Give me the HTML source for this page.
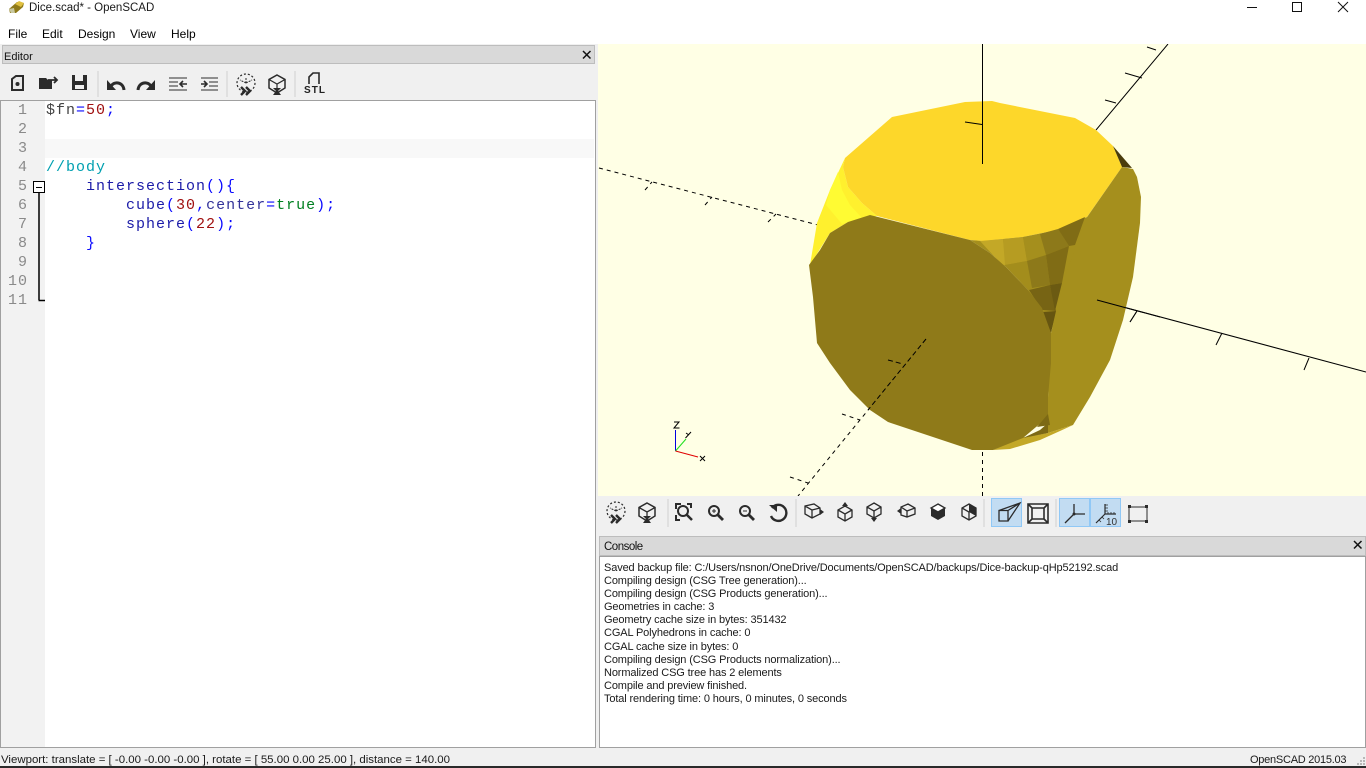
<!DOCTYPE html>
<html><head><meta charset="utf-8"><style>
*{box-sizing:border-box}
html,body{margin:0;padding:0;width:1366px;height:768px;overflow:hidden;background:#f0f0f0;font-family:"Liberation Sans",sans-serif;font-size:12px;color:#000}
#w{position:absolute;left:0;top:0;width:1366px;height:768px;overflow:hidden}
.a{position:absolute;white-space:nowrap}
.ln{position:absolute;left:0;width:28px;text-align:right;color:#8a8a8a;font-family:"Liberation Mono",monospace;font-size:15px;letter-spacing:1px;line-height:19px}
.cl{position:absolute;left:46px;white-space:pre;font-family:"Liberation Mono",monospace;font-size:15px;letter-spacing:1px;line-height:19px;color:#1c1ca8}
.r{color:#a01010}.b{color:#0a0aff}.t{color:#008020}
.con div{height:13.100px;line-height:13px;white-space:nowrap}
</style></head><body><div id="w">
<div class="a" style="left:0;top:0;width:1366px;height:44px;background:#fff"></div>
<svg class="a" style="left:8px;top:0" width="18" height="16"><path d="M1 9 L9 2 L16 3 L15 7 L8 13 L2 13Z" fill="#8f7a19"/><path d="M7 4 L11 1 L16 3 L13 7Z" fill="#e0c040"/><path d="M1 9 L6 8 L7 13 L3 13Z" fill="#c8c8a0"/></svg>
<div class="a" style="left:29px;top:1px;line-height:14px;font-size:11.500px;color:#1a1a1a">Dice.scad* - OpenSCAD</div>
<svg class="a" style="left:1240px;top:0" width="126" height="16" fill="none" stroke="#111" stroke-width="1"><path d="M7 7.500H17"/><rect x="52.500" y="2.500" width="9" height="9"/><path d="M98 2L108 12M108 2L98 12"/></svg>
<div class="a" style="left:8px;top:27px;line-height:14px">File</div>
<div class="a" style="left:42px;top:27px;line-height:14px">Edit</div>
<div class="a" style="left:78px;top:27px;line-height:14px">Design</div>
<div class="a" style="left:130px;top:27px;line-height:14px">View</div>
<div class="a" style="left:171px;top:27px;line-height:14px">Help</div>

<div class="a" style="left:2px;top:45px;width:593px;height:19px;background:#d9d9d9;border:1px solid #bdbdbd"></div>
<div class="a" style="left:4px;top:50px;line-height:14px;color:#111;font-size:11px">Editor</div>
<svg class="a" style="left:581px;top:49px" width="12" height="12" stroke="#111" stroke-width="1.500"><path d="M2 2L9.500 9.500M9.500 2L2 9.500"/></svg>

<svg class="a" style="left:0;top:64px" width="340" height="36" fill="none" stroke="#2b2b2b" stroke-width="2">
<path d="M12 15L16 12H23V26H12Z" fill="#e8e8e8"/><circle cx="17.500" cy="20" r="2" fill="#2b2b2b" stroke="none"/>
<path d="M39 14H46L48 16H52V25H39Z" fill="#2b2b2b" stroke="none"/><path d="M48 16H57M54 13L57 16L54 19" stroke-width="1.800"/>
<path d="M72 11H87V26H72Z" fill="#2b2b2b" stroke="none"/><rect x="75" y="11" width="8" height="6" fill="#f0f0f0" stroke="none"/><rect x="75" y="21" width="9" height="4" fill="#f0f0f0" stroke="none"/>
<path d="M98 7V33" stroke="#cfcfcf" stroke-width="1"/>
<path d="M110 26C110 17 123 16 124 26" stroke-width="3"/><path d="M107 16V26H116Z" fill="#2b2b2b" stroke="none"/>
<path d="M152 26C152 17 139 16 138 26" stroke-width="3"/><path d="M155 16V26H146Z" fill="#2b2b2b" stroke="none"/>
<path d="M169 14H187M169 18H178M169 22H178M169 26H187" stroke="#555" stroke-width="1.200"/><path d="M187 20H180M183 17L180 20L183 23" stroke-width="1.600"/>
<path d="M201 14H218M209 18H218M209 22H218M201 26H218" stroke="#555" stroke-width="1.200"/><path d="M201 20H207M204 17L207 20L204 23" stroke-width="1.600"/>
<path d="M227 7V33" stroke="#cfcfcf" stroke-width="1"/>
<circle cx="246" cy="19" r="9" stroke-width="1.200" stroke-dasharray="2 2"/><path d="M246 19L246 14M246 19L240 16M246 19L252 16" stroke-width="1" stroke-dasharray="2 1"/>
<path d="M241 23L245 27L241 31M246 23L250 27L246 31" stroke-width="2.400"/>
<path d="M277 11L285 15.500V24L277 29L269 24V15.500Z" stroke-width="1.500"/><path d="M269 15.500L277 20L285 15.500M277 20V24" stroke-width="1.200"/><path d="M273 24H281L278 27L281 31H273L276 27Z" fill="#2b2b2b" stroke="none"/>
<path d="M295 7V33" stroke="#cfcfcf" stroke-width="1"/>
<path d="M309 20V13L313 9H319V20" stroke-width="1.600"/>
<text x="304" y="29" font-family="Liberation Sans" font-weight="700" font-size="10" fill="#222" stroke="none" textLength="21">STL</text>
</svg>

<div class="a" style="left:0;top:100px;width:596px;height:648px;background:#fff;border:1px solid #a0a0a0"></div>
<div class="a" style="left:1px;top:101px;width:44px;height:646px;background:#f2f2f2"></div>
<div class="a" style="left:45px;top:139px;width:549px;height:19px;background:#f8f8f8"></div>
<div class="ln" style="top:101px">1</div><div class="ln" style="top:120px">2</div><div class="ln" style="top:139px">3</div><div class="ln" style="top:158px">4</div><div class="ln" style="top:177px">5</div><div class="ln" style="top:196px">6</div><div class="ln" style="top:215px">7</div><div class="ln" style="top:234px">8</div><div class="ln" style="top:253px">9</div><div class="ln" style="top:272px">10</div><div class="ln" style="top:291px">11</div>
<svg class="a" style="left:32px;top:180px" width="14" height="122" fill="none" stroke="#000"><rect x="1.500" y="1.500" width="11" height="11" fill="#fff"/><path d="M4 7.500H10"/><path d="M7 13V120M6.500 120.500H13" stroke-width="1.500"/></svg>
<div class="cl" style="top:101px"><span style="color:#444">$fn</span><span class="b">=</span><span class="r">50</span><span class="b">;</span></div>
<div class="cl" style="top:158px;color:#00a0b0">//body</div>
<div class="cl" style="top:177px">    intersection<span class="b">(){</span></div>
<div class="cl" style="top:196px">        cube<span class="b">(</span><span class="r">30</span><span class="b">,</span><span style="color:#333399">center</span><span class="b">=</span><span class="t">true</span><span class="b">);</span></div>
<div class="cl" style="top:215px">        sphere<span class="b">(</span><span class="r">22</span><span class="b">);</span></div>
<div class="cl" style="top:234px">    <span class="b">}</span></div>

<svg class="a" style="left:598px;top:44px" width="768" height="452" viewBox="598 44 768 452">
<rect x="598" y="44" width="768" height="452" fill="#ffffe5"/>
<g stroke="#000" stroke-width="1" fill="none">
<path d="M982.500 44V164"/><path d="M965 122L982 124.500"/>
<path d="M1096 130L1168 44M1105 100L1116 103M1125 73L1142 78M1147 47L1156 50"/>
<path d="M1097 300L1366 372M1130 322L1137 311M1216 345L1222 333M1304 370L1309 358"/>
<g stroke-dasharray="4 4">
<path d="M599 168L818 225M645 190L652 182M705 205L712 197M768 222L776 214"/>
<path d="M926 339L798 496M888 360L903 364M842 414L860 420M790 477L808 483"/>
<path d="M982.500 452V496"/>
</g></g>
<path d="M845 158L830 190L817 223L810 265L830 233L848 222L877 216L862 203L848 187L843 167Z" fill="#fff02e"/>
<path d="M838 172L830 190L826 205L842 224L848 222L862 218L850 205L842 190Z" fill="#fffb33"/>
<path d="M845 158L892 117L965 102L992 101L1000 103L1075 118L1096 130L1113 146L1122 167L1087 217L1057 230L1023 237L983 241L970 240L877 216L862 203L848 187L843 167Z" fill="#fdd72a"/>
<path d="M1113 146L1132 168L1122 167Z" fill="#4a3c0c"/>
<path d="M970 240L983 241L1023 237L1057 230L1087 217L1050 335L1028 290L1007 268L990 253Z" fill="#a58f1d"/>
<path d="M980 241L1003 239L1006 264L1003 266Z" fill="#c3a827"/><path d="M1003 239L1023 237L1027 261L1005 265Z" fill="#b69c22"/>
<path d="M1023 237L1040 234L1046 255L1027 261Z" fill="#a58f1d"/><path d="M1040 234L1058 229L1069 246L1046 255Z" fill="#8d791a"/>
<path d="M1058 229L1085 217L1075 245L1069 246Z" fill="#806c15"/>
<path d="M1005 265L1027 261L1032 288L1028 290Z" fill="#a38d1c"/><path d="M1027 261L1046 255L1050 285L1032 288Z" fill="#8d791a"/>
<path d="M1046 255L1069 246L1062 283L1050 285Z" fill="#806c15"/>
<path d="M1029 290L1050 285L1056 311L1042 310Z" fill="#776414"/><path d="M1050 285L1062 283L1055 311Z" fill="#6b5a12"/>
<path d="M1042 312L1056 311L1051 333Z" fill="#665510"/>
<path d="M1122 167L1133 169L1137 177L1141 197L1140 223L1133 277L1123 320L1110 360L1090 397L1073 425L1048 433L1048 397L1051 333L1063 283L1085 220Z" fill="#a58f1d"/>
<path d="M1048 433L1073 425L1060 431L1040 440L1010 449L993 450L1020 438Z" fill="#c3a827"/>
<path d="M1048 423V433L1023 438L1040 430Z" fill="#7c6915"/>
<path d="M809 265L820 250L830 233L848 222L870 215L970 240L990 253L1007 268L1028 290L1042 308L1051 333L1051 363L1048 397L1048 418L1036 427L1023 438L993 450L972 450L888 422L870 410L850 390L830 363L817 343L813 297Z" fill="#8f7a19"/>
<path d="M1048 414L1050 425L1037 427Z" fill="#7c6915"/>
<g stroke="#000" stroke-width="1" fill="none" stroke-dasharray="5 3"><path d="M926 339L868 410"/><path d="M888 360L903 364"/></g>
<path d="M982.500 44V164M965 122L982 124.500" stroke="#000" fill="none"/>
<path d="M1097 300L1160 317M1130 322L1137 311" stroke="#000" fill="none"/>
<path d="M675.500 451V430" stroke="#0000e0" stroke-width="1" fill="none"/>
<path d="M675.500 451L686 439" stroke="#20e020" stroke-width="1" fill="none"/>
<path d="M675.500 451L698 457" stroke="#e00000" stroke-width="1" fill="none"/>
<g stroke="#000" fill="none" stroke-width="1"><path d="M674 422H679L674 428H679.500"/><path d="M686 433L689 435M691 432L685.500 438"/><path d="M700 456L705 461M705 456L700 461"/></g>
</svg>

<svg class="a" style="left:599px;top:496px" width="767" height="38" fill="none" stroke="#2b2b2b" stroke-width="1.300">
<circle cx="17" cy="15" r="9" stroke-width="1.200" stroke-dasharray="2 2"/><path d="M17 15L17 10M17 15L11 12M17 15L23 12" stroke-width="1" stroke-dasharray="2 1"/><path d="M12 19L16 23L12 27M17 19L21 23L17 27" stroke-width="2.400"/>
<path d="M48 7L56 11.500V20L48 25L40 20V11.500Z" stroke-width="1.500"/><path d="M40 11.500L48 16L56 11.500M48 16V20"/><path d="M44 20H52L49 23L52 27H44L47 23Z" fill="#2b2b2b" stroke="none"/>
<path d="M69 3V31" stroke="#cfcfcf" stroke-width="1"/>
<path d="M77 13V8H82M88 8H92V12M77 19V24H81" stroke-width="2"/><circle cx="84" cy="15" r="5" stroke-width="2"/><path d="M88 19L93 24" stroke-width="2.500"/>
<circle cx="115" cy="15" r="5" stroke-width="2"/><path d="M119 19L124 24" stroke-width="2.800"/><path d="M113 15H117M115 13V17" stroke-width="1"/>
<circle cx="146" cy="15" r="5" stroke-width="2"/><path d="M150 19L155 24" stroke-width="2.800"/><path d="M144 15H148" stroke-width="1"/>
<path d="M173 12A8 8 0 1 1 172 20" stroke-width="2.400"/><path d="M170 9H178V16Z" fill="#2b2b2b" stroke="none"/>
<path d="M197 3V31" stroke="#cfcfcf" stroke-width="1"/>
<path d="M206 10L215 8L221 12V18L213 22L206 18ZM206 10L213 14V22M213 14L221 12"/><path d="M221 13L225 16L221 19Z" fill="#2b2b2b" stroke="none"/>
<path d="M246 10L253 14V21L246 25L239 21V14ZM239 14L246 18L253 14M246 18V25"/><path d="M243 10L246 6L249 10Z" fill="#2b2b2b" stroke="none"/>
<path d="M275 7L282 11V18L275 22L268 18V11ZM268 11L275 15L282 11M275 15V22"/><path d="M272 22H278L275 26Z" fill="#2b2b2b" stroke="none"/>
<path d="M309 8L316 12V18L308 21L302 19V11ZM302 11L308 15V21M308 15L316 12"/><path d="M302 12L298 15L302 18Z" fill="#2b2b2b" stroke="none"/>
<path d="M339 8L346 12V20L339 24L332 20V12Z" fill="#2b2b2b" stroke="none"/><path d="M339 8L346 12L339 16L332 12Z" fill="#fff" stroke="#2b2b2b"/>
<path d="M370 8L377 12V20L370 24L363 20V12Z"/><path d="M370 8L377 12V20L370 16Z" fill="#2b2b2b" stroke="none"/><path d="M363 12L370 16V24"/>
<path d="M385 3V31" stroke="#cfcfcf" stroke-width="1"/>
<rect x="392.500" y="2.500" width="30" height="28" fill="#c2dcf2" stroke="#90c8f6" stroke-width="1"/>
<path d="M400 14.500H409V25H400ZM400 14.500L421 7L409 25M409 14.500L421 7" stroke-width="1.300"/>
<path d="M429 8H449V27H429ZM433 12H445V23H433ZM429 8L433 12M449 8L445 12M429 27L433 23M449 27L445 23" stroke-width="1.600"/>
<path d="M457 3V31" stroke="#cfcfcf" stroke-width="1"/>
<rect x="460.500" y="2.500" width="30" height="28" fill="#c2dcf2" stroke="#90c8f6" stroke-width="1"/>
<rect x="491.500" y="2.500" width="30" height="28" fill="#c2dcf2" stroke="#90c8f6" stroke-width="1"/>
<path d="M475 8V18M475 18H486M475 18L466 27" stroke-width="1.300"/><circle cx="475" cy="18" r="1.500" fill="#2b2b2b" stroke="none"/>
<path d="M506 8V18M506 18H517M506 18L497 27" stroke-width="1.200"/><path d="M506 9H509M506 12H509M506 15H509M509 18V16M512 18V16M515 18V16M503 21L505 23M500 24L502 26" stroke-width=".8"/>
<text x="507" y="29" font-family="Liberation Sans" font-size="10" fill="#333" stroke="none">10</text>
<path d="M531 11H547M531 25H547M530 12V24M548 12V24" stroke-width="1"/><g fill="#2b2b2b" stroke="none"><rect x="529" y="9" width="3" height="3"/><rect x="546" y="9" width="3" height="3"/><rect x="529" y="24" width="3" height="3"/><rect x="546" y="24" width="3" height="3"/></g>
</svg>

<div class="a" style="left:599px;top:536px;width:767px;height:20px;background:#d9d9d9;border:1px solid #bdbdbd"></div>
<div class="a" style="left:604px;top:540px;line-height:14px;color:#111;font-size:11.500px;letter-spacing:-.5px">Console</div>
<svg class="a" style="left:1352px;top:539px" width="12" height="12" stroke="#111" stroke-width="1.500"><path d="M2 2L9.500 9.500M9.500 2L2 9.500"/></svg>
<div class="a" style="left:599px;top:556px;width:767px;height:192px;background:#fff;border:1px solid #a0a0a0"></div>
<div class="a con" style="left:604px;top:562px;color:#1a1a1a;font-size:11px;letter-spacing:-.13px"><div>Saved backup file: C:/Users/nsnon/OneDrive/Documents/OpenSCAD/backups/Dice-backup-qHp52192.scad</div><div>Compiling design (CSG Tree generation)...</div><div>Compiling design (CSG Products generation)...</div><div>Geometries in cache: 3</div><div>Geometry cache size in bytes: 351432</div><div>CGAL Polyhedrons in cache: 0</div><div>CGAL cache size in bytes: 0</div><div>Compiling design (CSG Products normalization)...</div><div>Normalized CSG tree has 2 elements</div><div>Compile and preview finished.</div><div>Total rendering time: 0 hours, 0 minutes, 0 seconds</div></div>
<div class="a" style="left:1px;top:753px;line-height:14px;color:#1a1a1a;font-size:11.450px">Viewport: translate = [ -0.00 -0.00 -0.00 ], rotate = [ 55.00 0.00 25.00 ], distance = 140.00</div>
<div class="a" style="left:1250px;top:753px;line-height:14px;color:#1a1a1a;font-size:11px;letter-spacing:-.25px">OpenSCAD 2015.03</div>
<svg class="a" style="left:1356px;top:757px" width="10" height="9" fill="#b8b8b8"><rect x="7" y="0" width="2" height="2"/><rect x="4" y="3" width="2" height="2"/><rect x="7" y="3" width="2" height="2"/><rect x="1" y="6" width="2" height="2"/><rect x="4" y="6" width="2" height="2"/><rect x="7" y="6" width="2" height="2"/></svg>
<div class="a" style="left:0;top:766px;width:1366px;height:2px;background:#2a2a2a"></div>
</div></body></html>
